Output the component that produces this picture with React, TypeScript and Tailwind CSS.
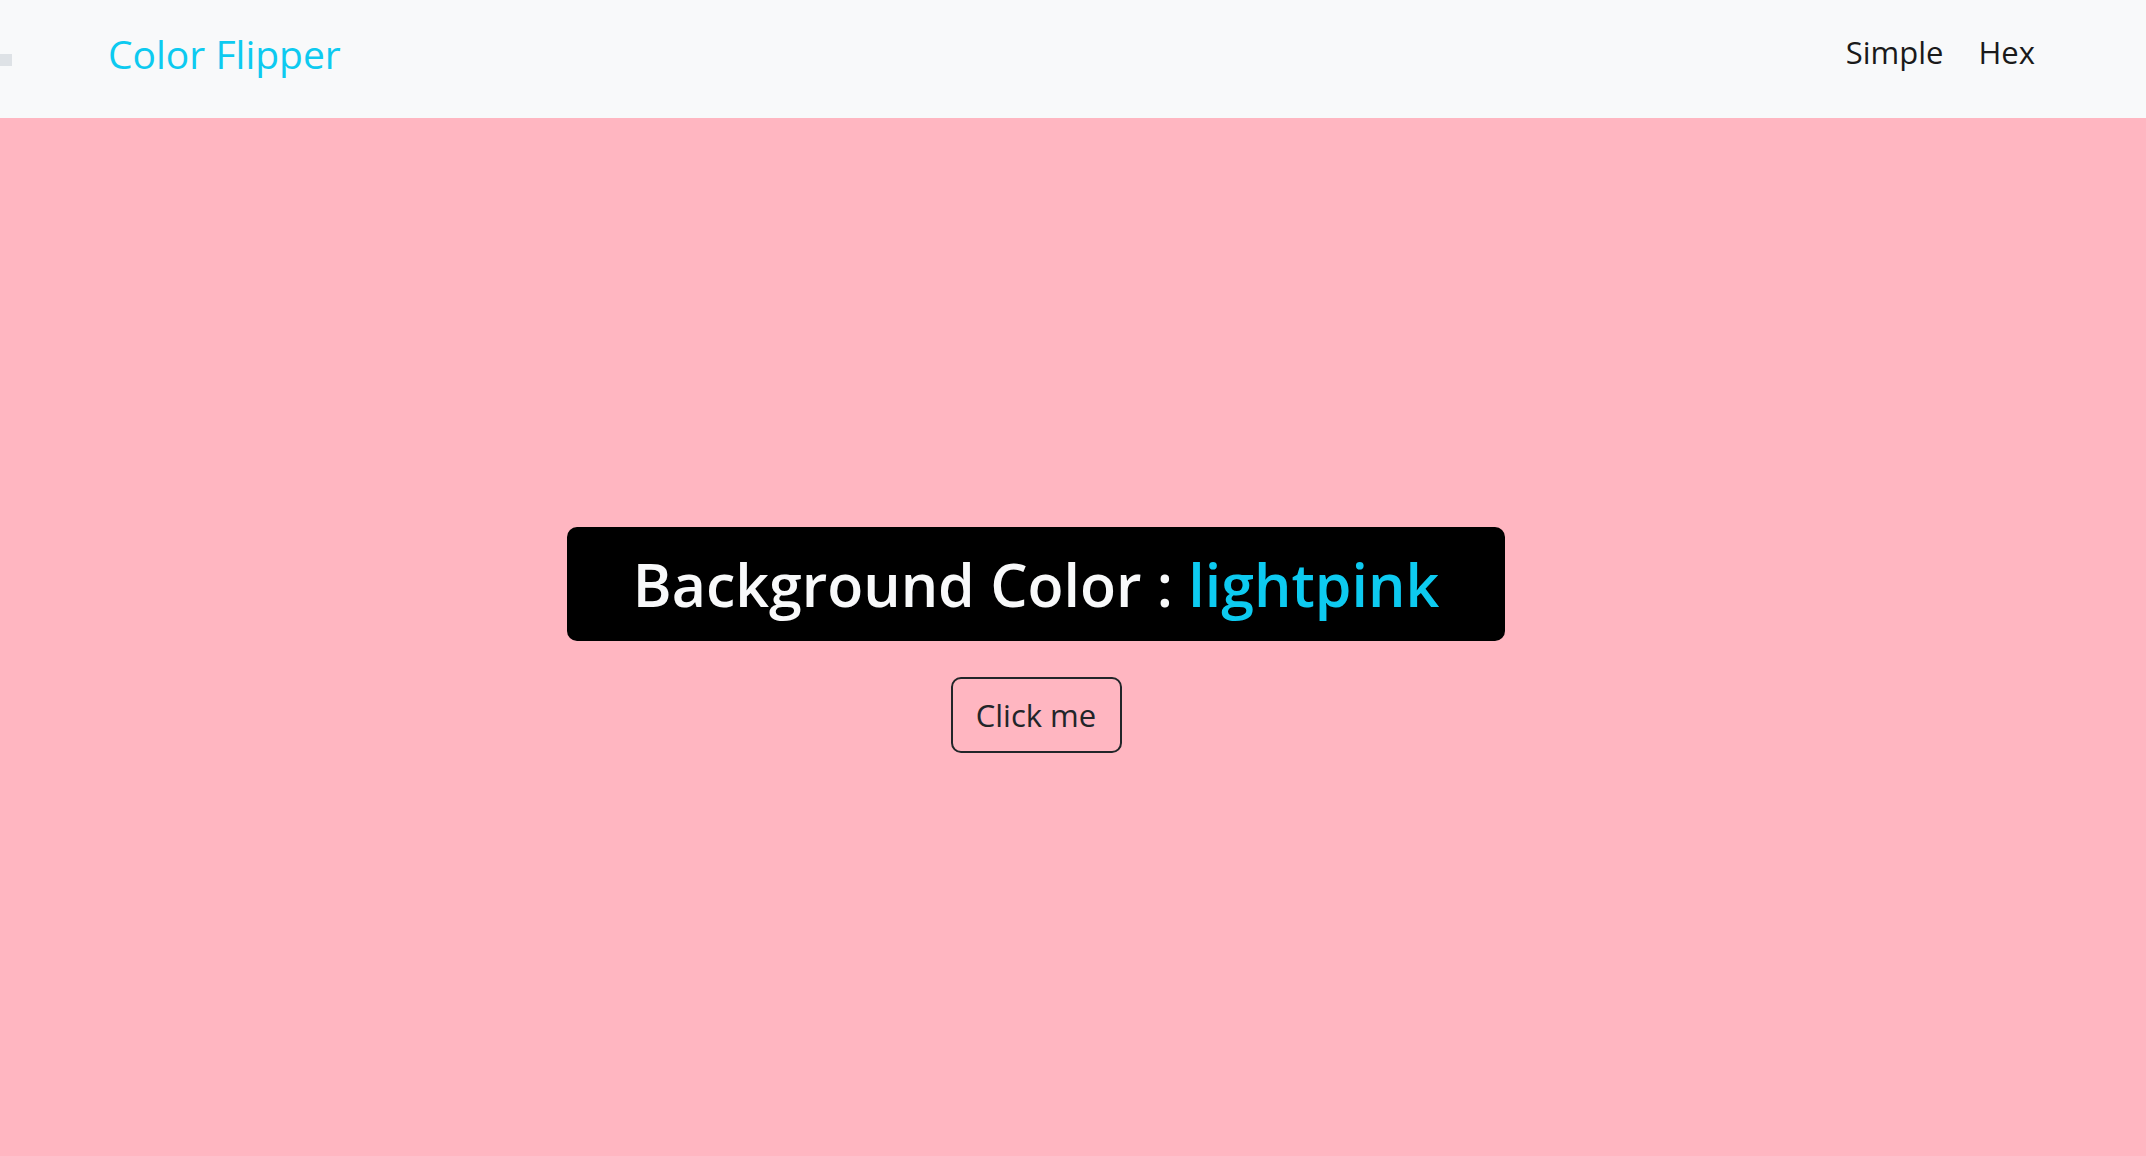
import React, { useState } from "react";

const colors = ["lightpink", "lightblue", "lightgreen", "khaki", "plum", "salmon"];

const App: React.FC = () => {
  const [index, setIndex] = useState<number>(0);
  const color = colors[index];

  const handleClick = () => {
    setIndex((index + 1) % colors.length);
  };

  return (
    <div className="min-h-screen flex flex-col font-['Open_Sans',sans-serif]">
      <nav className="relative h-[118px] shrink-0 bg-[#f8f9fa] flex items-center justify-between pl-[108px] pr-[111px]">
        <div className="absolute left-0 top-[54px] w-[12px] h-[12px] bg-[#dee2e6]" />
        <a href="#" className="text-[39px] text-[#0dcaf0] leading-none -mt-[12px]">
          Color Flipper
        </a>
        <div className="flex items-center gap-[35px] text-[31px] text-[#1a1a1a] leading-none -mt-[14px]">
          <a href="#">Simple</a>
          <a href="#">Hex</a>
        </div>
      </nav>

      <main className="flex-1 bg-[#ffb6c1] flex flex-col items-center justify-center pr-[74px] pt-[6px]">
        <div className="bg-black rounded-[10px] h-[114px] px-[66px] flex items-center">
          <h1 className="text-[59px] font-semibold text-[#f8f9fa] leading-none">
            Background Color : <span className="text-[#0dcaf0]">{color}</span>
          </h1>
        </div>
        <button
          onClick={handleClick}
          className="mt-[36px] h-[76px] w-[171px] border-2 border-[#212529] rounded-[10px] text-[31px] text-[#212529]"
        >
          Click me
        </button>
      </main>
    </div>
  );
};

export default App;
